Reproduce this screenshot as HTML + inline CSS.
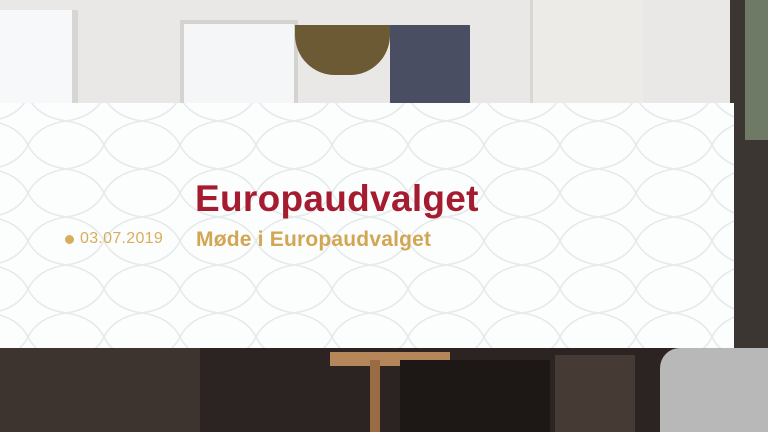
<!DOCTYPE html>
<html><head><meta charset="utf-8"><style>
html,body{margin:0;padding:0}
body{width:768px;height:432px;position:relative;overflow:hidden;background:#3a3330;font-family:"Liberation Sans",sans-serif}
.a{position:absolute}
</style></head><body>
<div class="a" style="left:0;top:0;width:768px;height:103px;background:#e9e8e6"></div>
<div class="a" style="left:0;top:10px;width:72px;height:93px;background:#f7f8fa;border-right:6px solid #d8d6d2"></div>
<div class="a" style="left:180px;top:20px;width:110px;height:83px;background:#f5f6f8;border:4px solid #d5d3cf"></div>
<div class="a" style="left:390px;top:25px;width:80px;height:78px;background:#4a4e63"></div>
<div class="a" style="left:530px;top:0;width:110px;height:103px;background:#ecebe8;border-left:3px solid #d9d7d3"></div>
<div class="a" style="left:295px;top:25px;width:95px;height:50px;background:#6b5a34;border-radius:0 0 40px 40px"></div>
<div class="a" style="left:730px;top:0;width:38px;height:432px;background:#3b3631"></div>
<div class="a" style="left:745px;top:0;width:23px;height:140px;background:#6e7a66"></div>
<div class="a" style="left:0;top:348px;width:768px;height:84px;background:#2b2422"></div>
<div class="a" style="left:0;top:348px;width:200px;height:84px;background:#3e342f"></div>
<div class="a" style="left:330px;top:352px;width:120px;height:14px;background:#b4865a"></div>
<div class="a" style="left:370px;top:360px;width:10px;height:72px;background:#9a6c43"></div>
<div class="a" style="left:400px;top:360px;width:150px;height:72px;background:#1d1816"></div>
<div class="a" style="left:555px;top:355px;width:80px;height:77px;background:#453a34"></div>
<div class="a" style="left:660px;top:348px;width:108px;height:84px;background:#b9b8b8;border-radius:20px 0 0 0"></div>
<svg class="a" style="left:0;top:103px" width="734" height="245">
<defs><pattern id="p" width="76" height="48" patternUnits="userSpaceOnUse" x="-10" y="-6">
<path d="M0 24 Q28 20 38 0 Q48 20 76 24 M0 24 Q28 28 38 48 Q48 28 76 24" fill="none" stroke="#e4eaea" stroke-width="1.6"/>
</pattern></defs>
<rect width="734" height="245" fill="#fcfdfd"/>
<rect width="734" height="245" fill="url(#p)"/>
</svg>
<div class="a" style="left:195px;top:178px;font-size:37px;font-weight:bold;color:#a51c30;letter-spacing:0.3px;line-height:42px">Europaudvalget</div>
<div class="a" style="left:196px;top:228px;font-size:21px;font-weight:bold;color:#d2a653;letter-spacing:0.2px;line-height:24px">Møde i Europaudvalget</div>
<div class="a" style="left:65px;top:235px;width:9px;height:9px;border-radius:50%;background:#d9ad5e"></div>
<div class="a" style="left:80px;top:229px;font-size:16px;color:#d9ad5e;line-height:19px;letter-spacing:0.3px">03.07.2019</div>
</body></html>
